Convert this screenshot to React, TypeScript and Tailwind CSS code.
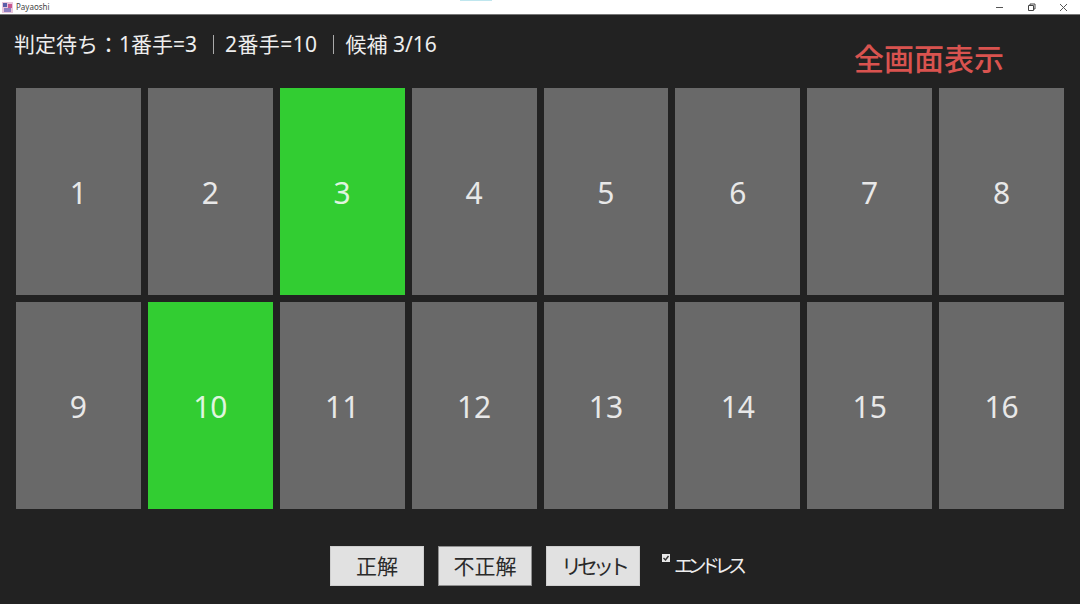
const cells = Array.from({ length: 16 }, (_, i) => i + 1);
const active = [3, 10];
const font = "font-['Noto_Sans','Noto_Sans_CJK_JP',sans-serif]";

function Action({ label, pressed, tight }: { label: string; pressed?: boolean; tight?: boolean }) {
  return (
    <button
      className={`w-[94px] h-[40px] bg-[#e1e1e1] text-[#2a2a2a] text-[21px] pt-[2px] flex items-center justify-center border ${
        pressed ? "border-[#8f8f8f]" : "border-[#cfcfcf]"
      } ${tight ? "tracking-[-5px]" : ""}`}
    >
      {label}
    </button>
  );
}

export default function App() {
  return (
    <div className={`relative w-[1080px] h-[604px] overflow-hidden bg-[#222222] flex flex-col ${font}`}>
      {/* Taskbar preview sliver over the title bar */}
      <div className="absolute left-[460px] top-0 w-[32px] h-px bg-[#bfe6ee]" />

      {/* Title bar */}
      <div className="h-[15px] shrink-0 bg-white border-b border-[#777777] flex items-center justify-between pl-[2px]">
        <div className="flex items-center gap-[3px]">
          <svg width="11" height="11" viewBox="0 0 11 11">
            <rect width="11" height="11" fill="#e8c6dc" />
            <rect x="1" y="1" width="4" height="4" fill="#5a5fa8" />
            <rect x="6" y="2" width="4" height="4" fill="#c9578f" />
            <rect x="2" y="6" width="7" height="4" fill="#8f7fc0" />
          </svg>
          <span className="text-[8px] leading-none text-[#444444]">Payaoshi</span>
        </div>
        <div className="flex items-center gap-[23px] pr-[12px]">
          <svg width="9" height="9" viewBox="0 0 9 9" stroke="#555555" fill="none">
            <path d="M1 4.5h7" />
          </svg>
          <svg width="9" height="9" viewBox="0 0 9 9" stroke="#444444" fill="none">
            <path d="M1.5 2.5h5v5h-5z M3 2.5v-1.500h5v5h-1.500" />
          </svg>
          <svg width="9" height="9" viewBox="0 0 9 9" stroke="#555555" fill="none">
            <path d="M1 1l7 7M8 1l-7 7" />
          </svg>
        </div>
      </div>

      {/* Status */}
      <div className="h-[73px] shrink-0 flex justify-between pl-[14px] pr-[76px]">
        <div className="flex items-center h-[59px] text-[21px] text-[#eeeeee] whitespace-nowrap">
          <span>判定待ち：1番手=3</span>
          <span className="w-px h-[19px] bg-[#aaaaaa] ml-[16px] mr-[11px]" />
          <span className="tracking-[0.4px]">2番手=10</span>
          <span className="w-px h-[19px] bg-[#aaaaaa] ml-[15px] mr-[12px]" />
          <span>候補 3/16</span>
        </div>
        <div className="pt-[24px] text-[30px] leading-[40px] font-medium text-[#d9534f] whitespace-nowrap">
          全画面表示
        </div>
      </div>

      {/* Grid */}
      <div className="grid grid-cols-8 grid-rows-[207px_207px] gap-[7px] ml-[16px] mr-[16px]">
        {cells.map((n) => (
          <div
            key={n}
            className={`flex items-center justify-center pt-[2px] text-[30px] ${
              active.includes(n) ? "bg-[#32cd32] text-[#dff5df]" : "bg-[#696969] text-[#e8e8e8]"
            }`}
          >
            {n}
          </div>
        ))}
      </div>

      {/* Actions */}
      <div className="flex items-start mt-[37px] pl-[330px]">
        <div className="flex gap-[14px]">
          <Action label="正解" />
          <Action label="不正解" pressed />
          <Action label="リセット" tight />
        </div>
        <label className="flex items-start ml-[22px] mt-[8px] text-[#eeeeee]">
          <span className="w-[8px] h-[8px] bg-[#e8e8e8] flex items-center justify-center">
            <svg width="8" height="8" viewBox="0 0 8 8" fill="none" stroke="#333333" strokeWidth="1.400">
              <path d="M1.500 4l2 2 3-4" />
            </svg>
          </span>
          <span className="ml-[4px] text-[19px] leading-[22px] tracking-[-5.500px] mt-[1px]">エンドレス</span>
        </label>
      </div>
    </div>
  );
}
